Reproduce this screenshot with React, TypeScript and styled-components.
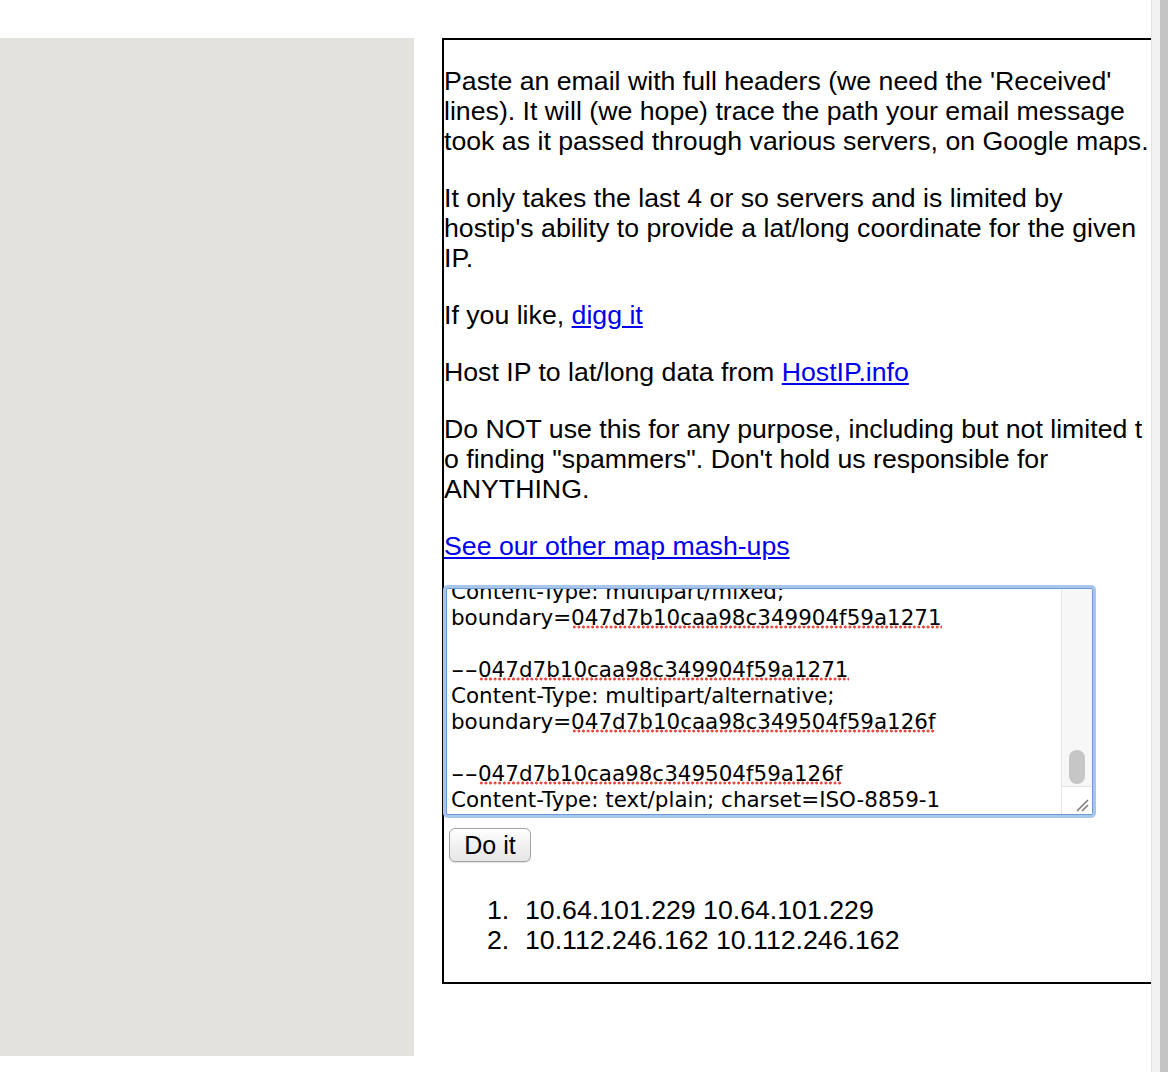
import React from "react";
import styled, { createGlobalStyle } from "styled-components";

const GlobalStyle = createGlobalStyle`
  html, body {
    margin: 0;
    padding: 0;
    background: #ffffff;
  }
  body {
    font-family: "Liberation Sans", Arial, sans-serif;
    color: #000000;
  }
`;

const Frame = styled.div`
  display: flex;
  width: 1168px;
  height: 1072px;
  overflow: hidden;
`;

const Viewport = styled.div`
  flex: 1;
  min-width: 0;
  overflow: hidden;
  display: flex;
  align-items: flex-start;
  gap: 28px;
  padding-top: 38px;
`;

const Sidebar = styled.aside`
  flex: none;
  width: 414px;
  height: 1018px;
  background: #e3e2de;
`;

const Panel = styled.main`
  flex: none;
  width: 716px;
  border: 2px solid #000000;
  font-size: 26.7px;
  line-height: 30px;
`;

const Para = styled.p`
  margin: 27px 0;
  &:first-child {
    margin-top: 26px;
  }
`;

const Link = styled.a`
  color: #0000ee;
  text-decoration: underline;
`;

const Form = styled.form`
  display: flex;
  flex-direction: column;
  align-items: flex-start;
  margin-top: 26px;
`;

const TextBox = styled.div`
  display: flex;
  width: 645px;
  height: 225px;
  margin-left: 2px;
  border: 1px solid #6f9bd3;
  border-radius: 2px;
  box-shadow: 0 0 0 3px #a8c6ec;
  background: #ffffff;
  overflow: hidden;
`;

const TextPane = styled.div`
  flex: 1;
  min-width: 0;
  display: flex;
  flex-direction: column;
  justify-content: flex-end;
  overflow: hidden;
  padding: 0 4px 1px 4px;
  font-family: "DejaVu Sans", "Lucida Grande", Verdana, sans-serif;
  font-size: 21.45px;
  line-height: 26px;
  white-space: pre;
`;

const Line = styled.div`
  height: 26px;
`;

const Dashes = styled.span`
  display: inline-block;
  transform: scaleX(1.75);
  transform-origin: left center;
  margin-right: 11.5px;
`;

const Misspelled = styled.span`
  background-image: radial-gradient(circle, #ea4a41 1.3px, transparent 1.8px);
  background-size: 4.6px 4px;
  background-repeat: repeat-x;
  background-position: 1px calc(100% - 1px);
`;

const ScrollColumn = styled.div`
  flex: none;
  width: 30px;
  display: flex;
  flex-direction: column;
  border-left: 1px solid #e8e8e8;
`;

const Track = styled.div`
  flex: 1;
  display: flex;
  flex-direction: column;
  justify-content: flex-end;
  align-items: center;
  background: #f7f7f7;
  padding-bottom: 2px;
`;

const Thumb = styled.div`
  width: 16px;
  height: 34px;
  border-radius: 8px;
  background: #c6c6c6;
`;

const Resizer = styled.div`
  flex: none;
  height: 27px;
  border-top: 1px solid #e3e3e3;
  background: #ffffff;
  display: flex;
  align-items: flex-end;
  justify-content: flex-end;
`;

const Button = styled.button`
  margin: 13px 0 0 5px;
  width: 82px;
  height: 34px;
  padding: 0;
  border: 1px solid #a3a3a3;
  border-radius: 6px;
  background: linear-gradient(#ffffff, #f1f1f1 50%, #e6e6e6);
  box-shadow: 0 1px 1px rgba(0, 0, 0, 0.12);
  font-family: "Liberation Sans", Arial, sans-serif;
  font-size: 25px;
  color: #000000;
`;

const Results = styled.ol`
  list-style: none;
  counter-reset: item;
  margin: 33px 0 27px 0;
  padding: 0 0 0 43px;
`;

const Result = styled.li`
  counter-increment: item;
  display: flex;
  &::before {
    content: counter(item) ".";
    flex: none;
    width: 38px;
  }
`;

const ScrollStrip = styled.div`
  flex: none;
  width: 16px;
  height: 100%;
  display: flex;
  border-left: 1px solid #e2e2e2;
  background: #f2f2f2;
`;

const StripBar = styled.div`
  margin-left: auto;
  width: 8px;
  height: 100%;
  background: #c4c4c4;
`;

const hash1 = "047d7b10caa98c349904f59a1271";
const hash2 = "047d7b10caa98c349504f59a126f";

export default function App() {
  return (
    <>
      <GlobalStyle />
      <Frame>
        <Viewport>
          <Sidebar />
          <Panel>
            <Para>
              Paste an email with full headers (we need the 'Received'
              <br />
              lines). It will (we hope) trace the path your email message
              <br />
              took as it passed through various servers, on Google maps.
            </Para>
            <Para>
              It only takes the last 4 or so servers and is limited by
              <br />
              hostip's ability to provide a lat/long coordinate for the given
              <br />
              IP.
            </Para>
            <Para>
              If you like, <Link href="#">digg it</Link>
            </Para>
            <Para>
              Host IP to lat/long data from <Link href="#">HostIP.info</Link>
            </Para>
            <Para>
              Do NOT use this for any purpose, including but not limited t
              <br />
              o finding "spammers". Don't hold us responsible for
              <br />
              ANYTHING.
            </Para>
            <Para>
              <Link href="#">See our other map mash-ups</Link>
            </Para>
            <Form onSubmit={(e) => e.preventDefault()}>
              <TextBox>
                <TextPane>
                  <Line>MIME-Version: 1.0</Line>
                  <Line>Content-Type: multipart/mixed;</Line>
                  <Line>
                    boundary=<Misspelled>{hash1}</Misspelled>
                  </Line>
                  <Line> </Line>
                  <Line>
                    <Dashes>--</Dashes>
                    <Misspelled>{hash1}</Misspelled>
                  </Line>
                  <Line>Content-Type: multipart/alternative;</Line>
                  <Line>
                    boundary=<Misspelled>{hash2}</Misspelled>
                  </Line>
                  <Line> </Line>
                  <Line>
                    <Dashes>--</Dashes>
                    <Misspelled>{hash2}</Misspelled>
                  </Line>
                  <Line>Content-Type: text/plain; charset=ISO-8859-1</Line>
                </TextPane>
                <ScrollColumn>
                  <Track>
                    <Thumb />
                  </Track>
                  <Resizer>
                    <svg width="20" height="20" viewBox="0 0 20 20">
                      <path d="M5 17 L16 6 M10 17 L16 11" stroke="#7c7c7c" strokeWidth="1.6" fill="none" />
                    </svg>
                  </Resizer>
                </ScrollColumn>
              </TextBox>
              <Button type="submit">Do it</Button>
            </Form>
            <Results>
              <Result>10.64.101.229 10.64.101.229</Result>
              <Result>10.112.246.162 10.112.246.162</Result>
            </Results>
          </Panel>
        </Viewport>
        <ScrollStrip>
          <StripBar />
        </ScrollStrip>
      </Frame>
    </>
  );
}
